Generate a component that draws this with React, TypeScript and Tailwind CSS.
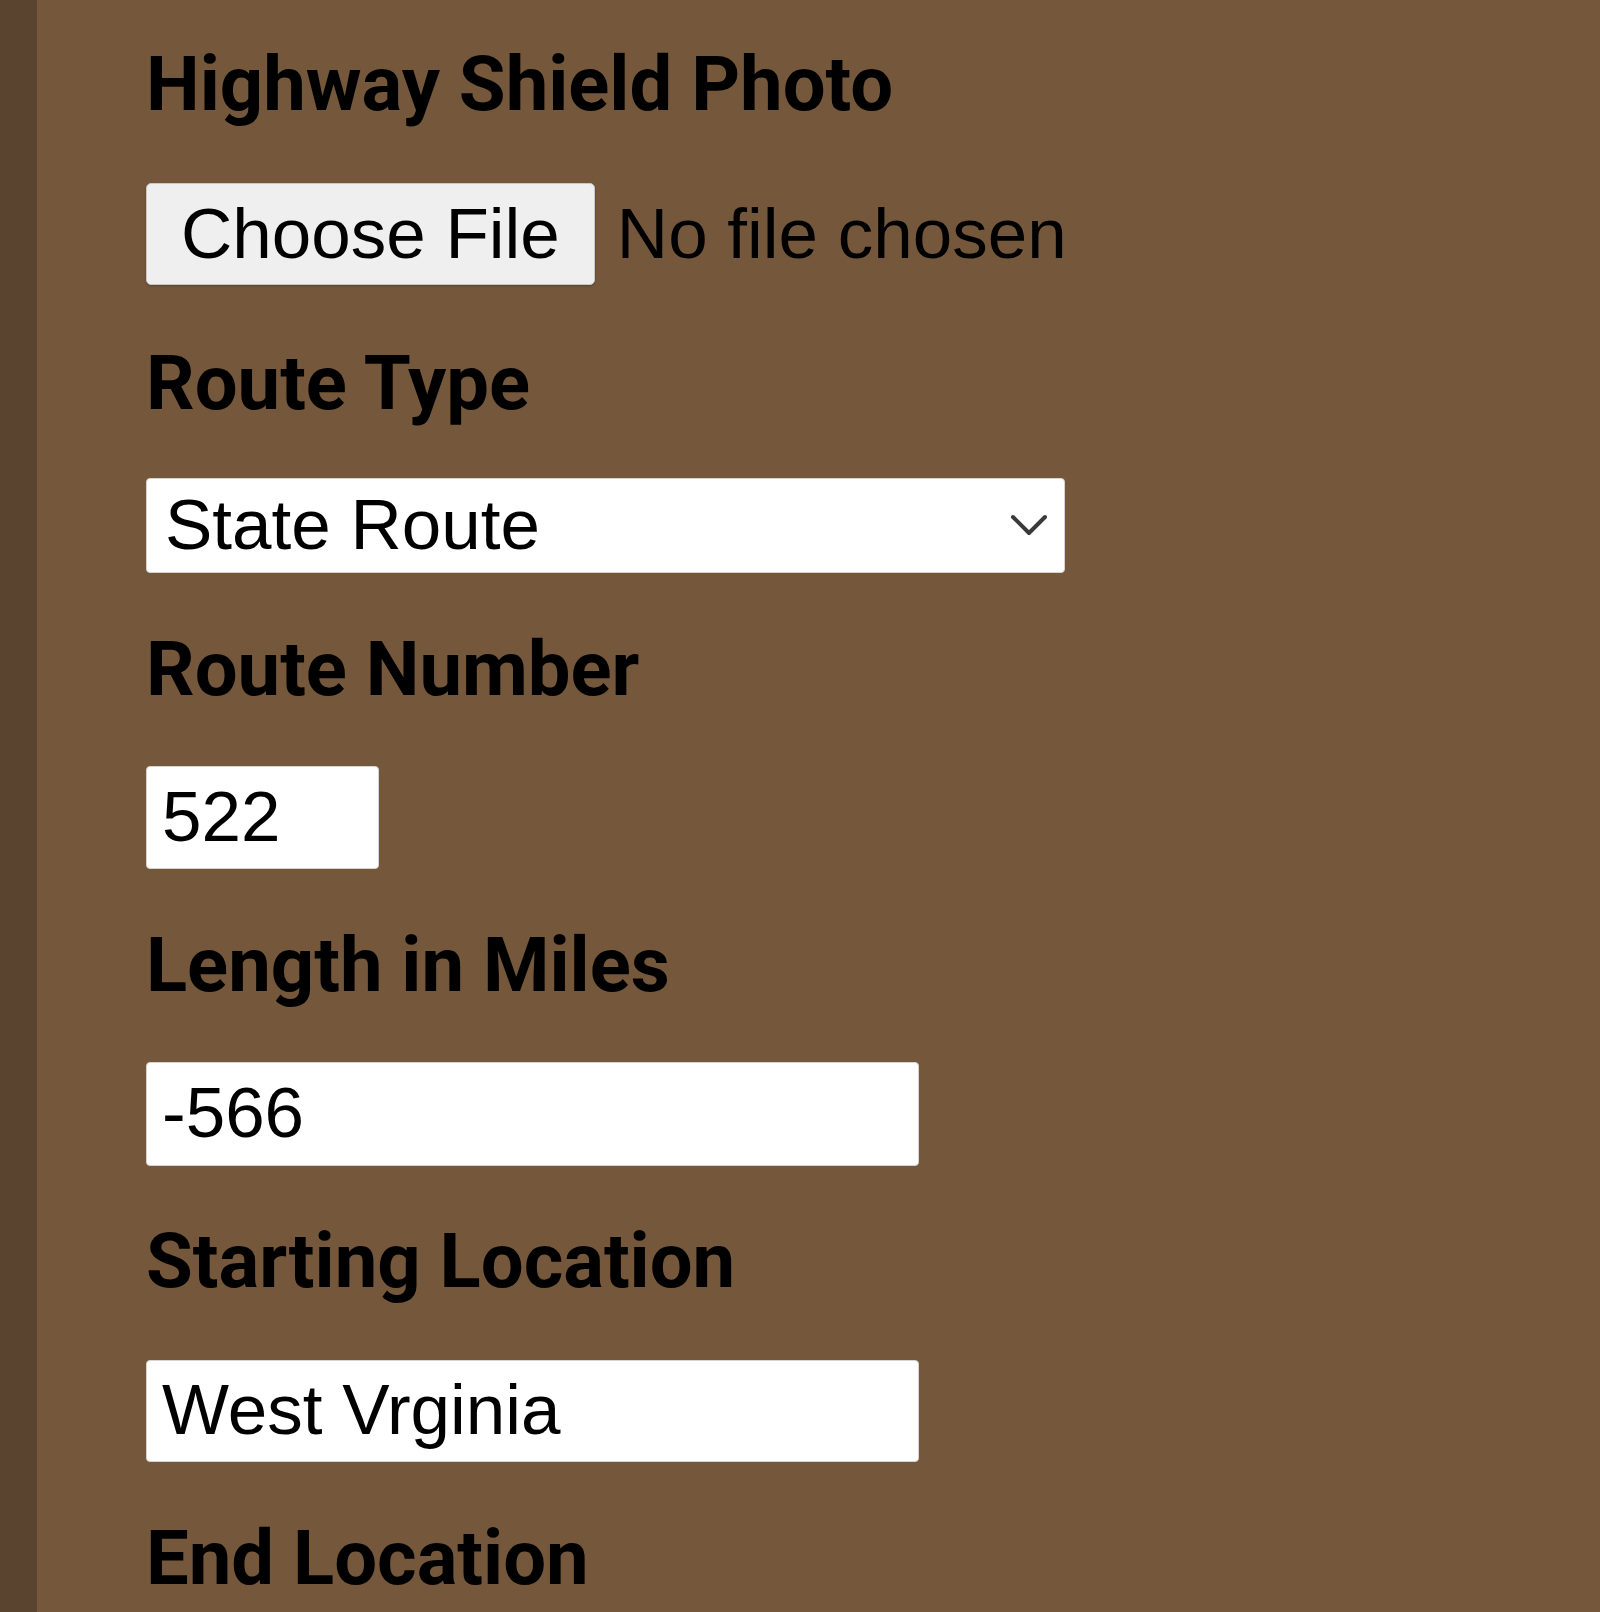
import React from "react";

const labelCls =
  "font-['Roboto','Liberation_Sans',sans-serif] font-bold text-[76px] leading-[76px] text-black";
const fieldFont = "font-['Liberation_Sans','Arial',sans-serif] text-[71px] text-black";

const Label = ({ children }: { children: React.ReactNode }) => (
  <label className={labelCls}>{children}</label>
);

const App = () => {
  return (
    <div className="flex h-[1612px] w-full overflow-hidden bg-[#75583b]">
      {/* dark strip on the left edge */}
      <div className="w-[37px] shrink-0 bg-[#5a4430]" />

      <form className="flex flex-col items-start pl-[109px] pt-[46px]">
        <Label>Highway Shield Photo</Label>
        <div className="mt-[59px] flex items-center">
          <button
            type="button"
            className={`${fieldFont} flex h-[102px] items-center rounded-[5px] border border-[#c8c8c8] bg-[#efefef] px-[34px] shadow-[0_1px_2px_rgba(0,0,0,0.25)]`}
          >
            Choose File
          </button>
          <span className={`${fieldFont} ml-[22px]`}>No file chosen</span>
        </div>

        <div className="mt-[57px]">
          <Label>Route Type</Label>
        </div>
        <div
          className={`${fieldFont} relative mt-[57px] flex h-[95px] w-[919px] items-center rounded-[4px] border border-[#d4d4d4] bg-white pl-[18px]`}
        >
          State Route
          <svg
            className="absolute right-[15px] top-1/2 -translate-y-1/2"
            width="40"
            height="24"
            viewBox="0 0 40 24"
            fill="none"
          >
            <path d="M4 4 L20 20 L36 4" stroke="#3a3a3a" strokeWidth="4" strokeLinecap="round" strokeLinejoin="round" />
          </svg>
        </div>

        <div className="mt-[58px]">
          <Label>Route Number</Label>
        </div>
        <input
          readOnly
          value="522"
          className={`${fieldFont} mt-[59px] h-[103px] w-[233px] rounded-[4px] border border-[#d4d4d4] bg-white pl-[15px] outline-none`}
        />

        <div className="mt-[58px]">
          <Label>Length in Miles</Label>
        </div>
        <input
          readOnly
          value="-566"
          className={`${fieldFont} mt-[59px] h-[104px] w-[773px] rounded-[4px] border border-[#d4d4d4] bg-white pl-[15px] outline-none`}
        />

        <div className="mt-[57px]">
          <Label>Starting Location</Label>
        </div>
        <input
          readOnly
          value="West Vrginia"
          className={`${fieldFont} mt-[61px] h-[102px] w-[773px] rounded-[4px] border border-[#d4d4d4] bg-white pl-[15px] outline-none`}
        />

        <div className="mt-[58px]">
          <Label>End Location</Label>
        </div>
      </form>
    </div>
  );
};

export default App;
